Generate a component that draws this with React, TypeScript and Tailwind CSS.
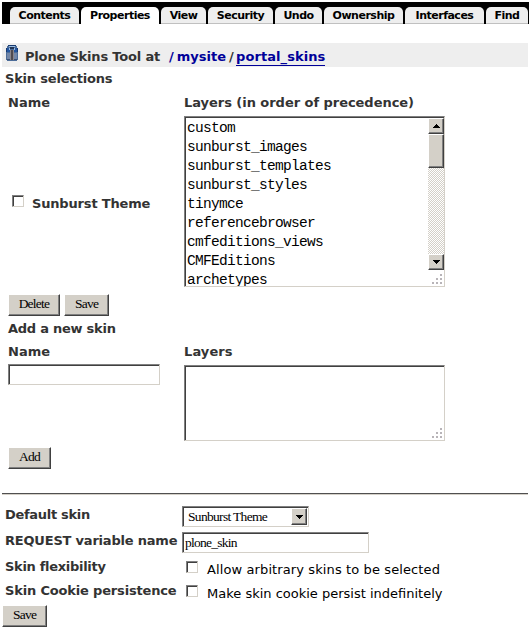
import React from 'react';

const sunken = 'border border-t-[#808080] border-l-[#808080] border-r-[#d4d0c8] border-b-[#d4d0c8] bg-white shadow-[inset_1px_1px_0_#404040]';
const raised = 'border border-t-white border-l-white border-r-[#404040] border-b-[#404040] bg-[#d4d0c8] shadow-[inset_-1px_-1px_0_#808080]';
const serif = "font-['Liberation_Serif',serif] font-normal text-black";

const tabs = [
  { label: 'Contents', box: 'ml-2 w-[69px]' },
  { label: 'Properties', box: 'ml-[2px] w-[78px]', active: true },
  { label: 'View', box: 'ml-[2px] w-[45px]' },
  { label: 'Security', box: 'ml-[2px] w-[65px]' },
  { label: 'Undo', box: 'ml-[2px] w-[47px]' },
  { label: 'Ownership', box: 'ml-[2px] w-[79px]' },
  { label: 'Interfaces', box: 'ml-[2px] w-[79px]' },
  { label: 'Find', box: 'ml-[2px] w-[42px]' },
];

const layers = ['custom', 'sunburst_images', 'sunburst_templates', 'sunburst_styles', 'tinymce', 'referencebrowser', 'cmfeditions_views', 'CMFEditions', 'archetypes'];

function Button({ label, box }: { label: string; box: string }) {
  return <button className={`h-[22px] pb-[2px] text-[13.5px] leading-[18px] tracking-[-0.75px] ${raised} ${serif} ${box}`}>{label}</button>;
}

function Checkbox({ box = '' }: { box?: string }) {
  return <span className={`block h-[12px] w-[12px] shrink-0 ${sunken} ${box}`} />;
}

function Arrow({ down = false }: { down?: boolean }) {
  return (
    <svg width="7" height="4" viewBox="0 0 7 4" shapeRendering="crispEdges">
      <path d={down ? 'M0 0h7v1H6v1H5v1H4v1H3V3H2V2H1V1H0z' : 'M3 0h1v1h1v1h1v1h1v1H0V3h1V2h1V1h1z'} />
    </svg>
  );
}

function Grip() {
  return (
    <svg className="absolute right-[2px] bottom-[2px]" width="10" height="10" fill="#b8b4b8" shapeRendering="crispEdges">
      <path d="M8 0h2v2H8zM4 4h2v2H4zM8 4h2v2H8zM0 8h2v2H0zM4 8h2v2H4zM8 8h2v2H8z" />
    </svg>
  );
}

function Shirt() {
  return (
    <svg width="12" height="16" viewBox="0 0 12 16" shapeRendering="crispEdges">
      <path fill="#4d6d99" d="M2 0h8v1h1v2h1v12h-1v1H1v-1H0V3h1V1h1z" />
      <path fill="#2456a0" d="M1 3h3v4H1zM8 3h3v4H8z" />
      <path fill="#193b70" d="M0 3h1v4H0zM11 3h1v4h-1zM2 0h8v1H2z" />
      <path fill="#98bce4" d="M3 1h6v1H3zM3 3h1v2H3zM8 3h1v2H8z" />
      <path fill="#233554" d="M4 2h4v2H4z" />
      <path fill="#7387a8" d="M1 8h3v6H1zM8 8h3v6H8z" />
      <path fill="#8a8589" d="M4 5h4v10H4z" />
      <path fill="#4f4b50" d="M5 5h2v10H5z" />
      <path fill="#3b5175" d="M1 14h3v1H1zM8 14h3v1H8z" />
    </svg>
  );
}

export default function App() {
  return (
    <div className="h-[631px] w-[529px] overflow-hidden bg-white pt-[2px] pl-[2px] font-['DejaVu_Sans',sans-serif] text-[13px] leading-[16px] text-[#333333]">
      <nav className="flex h-[22px] w-[527px] bg-black pt-[5px] text-[11px] font-bold text-black">
        {tabs.map((t) => (
          <div
            key={t.label}
            className={`h-[17px] shrink-0 overflow-hidden rounded-t-[5px] text-center leading-[17px] whitespace-nowrap ${t.active ? 'bg-white' : 'border-b border-[#c0c0c0] bg-[#eeeeee]'} ${t.box}`}
          >
            <span className="tracking-[-0.5px]">{t.label}</span>
          </div>
        ))}
      </nav>

      <header className="mt-[19px] flex h-[24px] w-[526px] bg-[#eeeeee] pt-[2px] pl-[4px] font-bold whitespace-pre">
        <Shirt />
        <span className="w-[144px] pt-[4px] pl-[7px] tracking-[-0.18px]">Plone Skins Tool at</span>
        <span className="w-[74px] pt-[4px] pl-[7px] text-[#000099]">
          <span className="mr-[3px]">/</span>mysite<span className="ml-[3px] text-[#333333]">/</span>
        </span>
        <a className="mt-[4px] h-[17px] border-b border-[#000099] tracking-[0.08px] text-[#000099]">portal_skins</a>
      </header>

      <section className="pl-[6px] font-bold">
        <h2 className="-ml-[3px] pt-[4px] tracking-[-0.2px]">Skin selections</h2>
        <div className="flex h-[29px] pt-[8px]">
          <span className="w-[176px]">Name</span>
          <span className="tracking-[-0.04px] whitespace-nowrap">Layers (in order of precedence)</span>
        </div>
        <div className="flex h-[171px]">
          <div className="flex w-[176px] pt-[79px] pl-[4px]">
            <Checkbox />
            <span className="ml-[8px] pt-[1px] tracking-[-0.17px]">Sunburst Theme</span>
          </div>
          <div className={`relative flex h-[171px] w-[261px] overflow-hidden ${sunken}`}>
            <div className="flex-1 pt-[2px] pl-[2px] font-['Liberation_Mono',monospace] text-[14.5px] leading-[19px] font-normal tracking-[-0.7px] text-black">
              {layers.map((l) => <div key={l} className="h-[19px]">{l}</div>)}
            </div>
            <div className="mt-px flex h-[152px] w-[16px] flex-col bg-[repeating-conic-gradient(#d4d0c8_0%_25%,#ffffff_0%_50%)] bg-[size:2px_2px]">
              <span className={`flex h-[16px] w-[16px] items-center justify-center ${raised}`}><Arrow /></span>
              <span className={`h-[34px] w-[16px] ${raised}`} />
              <span className={`mt-auto flex h-[16px] w-[16px] items-center justify-center ${raised}`}><Arrow down /></span>
            </div>
            <Grip />
          </div>
        </div>
        <div className="mt-[7px] flex gap-[4px]">
          <Button label="Delete" box="w-[52px]" />
          <Button label="Save" box="w-[45px]" />
        </div>
        <h2 className="mt-[5px] tracking-[-0.25px]">Add a new skin</h2>
        <div className="mt-[7px] flex h-[20px]">
          <span className="w-[176px]">Name</span>
          <span className="tracking-[0.1px]">Layers</span>
        </div>
        <div className="flex">
          <div className="w-[176px]"><div className={`h-[21px] w-[152px] ${sunken}`} /></div>
          <div className={`relative mt-px h-[76px] w-[261px] ${sunken}`}><Grip /></div>
        </div>
        <Button label="Add" box="mt-[6px] block w-[43px]" />
      </section>

      <hr className="mt-[24px] h-[2px] w-[526px] border-t border-b border-t-[#505050] border-b-[#d4d0c8]" />

      <section>
        <div className="mt-[11px] flex h-[26px]">
          <span className="w-[180px] pt-px pl-[3px] font-bold tracking-[-0.3px]">Default skin</span>
          <div className={`flex h-[21px] w-[127px] p-px ${sunken}`}>
            <span className={`flex-1 pl-[4px] text-[13.5px] leading-[17px] tracking-[-0.68px] whitespace-nowrap ${serif}`}>Sunburst Theme</span>
            <span className={`flex h-[17px] w-[16px] items-center justify-center ${raised}`}><Arrow down /></span>
          </div>
        </div>
        <div className="flex h-[26px]">
          <span className="w-[180px] pt-px pl-[3px] font-bold tracking-[-0.2px] whitespace-nowrap">REQUEST variable name</span>
          <div className={`h-[21px] w-[187px] pt-px pl-[2px] text-[13.5px] leading-[18px] tracking-[-0.75px] ${serif} ${sunken}`}>plone_skin</div>
        </div>
        <div className="flex h-[25px]">
          <span className="w-[180px] pt-px pl-[3px] font-bold tracking-[-0.3px]">Skin flexibility</span>
          <Checkbox box="mt-[3px] ml-[4px]" />
          <span className="ml-[9px] pt-[4px] tracking-[0.11px] whitespace-nowrap text-black">Allow arbitrary skins to be selected</span>
        </div>
        <div className="flex h-[22px]">
          <span className="w-[180px] pl-[3px] font-bold tracking-[-0.17px] whitespace-nowrap">Skin Cookie persistence</span>
          <Checkbox box="mt-[2px] ml-[4px]" />
          <span className="ml-[9px] pt-[3px] whitespace-nowrap text-black">Make skin cookie persist indefinitely</span>
        </div>
        <Button label="Save" box="block w-[45px]" />
      </section>
    </div>
  );
}
